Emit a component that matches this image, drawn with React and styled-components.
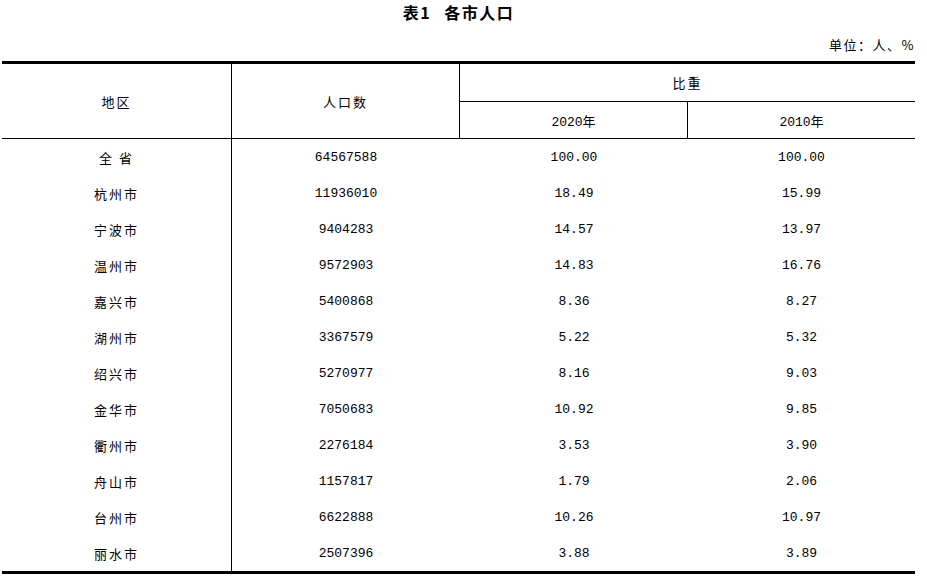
import React from "react";
import styled, { createGlobalStyle } from "styled-components";

const Global = createGlobalStyle`
  html, body { margin: 0; padding: 0; background: #fff; }
  body { font-family: "Noto Sans CJK SC", sans-serif; color: #000; }
`;

const Page = styled.div`
  width: 913px;
  margin-left: 2px;
`;

const Title = styled.h1`
  margin: 0;
  height: 25px;
  line-height: 25px;
  text-align: center;
  font-size: 16px;
  font-weight: 700;
  letter-spacing: 1.5px;
  font-family: "Noto Sans CJK SC", sans-serif;
`;

const TitleGap = styled.span`
  display: inline-block;
  width: 13px;
`;

const Unit = styled.div`
  height: 36px;
  line-height: 40px;
  text-align: right;
  font-size: 13px;
  letter-spacing: 1.5px;
  font-family: "Noto Sans CJK SC", sans-serif;
`;

const Table = styled.table`
  width: 913px;
  border-collapse: separate;
  border-spacing: 0;
  border-top: 3px solid #000;
  border-bottom: 3px solid #000;
  table-layout: fixed;
`;

const Head = styled.th`
  padding: 0;
  box-sizing: border-box;
  font-weight: 400;
  font-size: 13px;
  letter-spacing: ${(p) => (p.$num ? "0" : "2px")};
  text-align: center;
  vertical-align: middle;
  height: ${(p) => p.$h}px;
  border-right: ${(p) => (p.$right ? "1px solid #000" : "none")};
  border-bottom: 1px solid #000;
  font-family: "Liberation Mono", "Noto Sans CJK SC", monospace;
`;

const Cell = styled.td`
  padding: 0;
  height: 36px;
  box-sizing: border-box;
  text-align: center;
  vertical-align: middle;
  font-size: 13px;
  border-right: ${(p) => (p.$right ? "1px solid #000" : "none")};
  font-family: ${(p) =>
    p.$num
      ? `"Liberation Mono", monospace`
      : `"Noto Sans CJK SC", sans-serif`};
  letter-spacing: ${(p) => (p.$num ? "0" : "2px")};
`;

const rows = [
  ["全 省", "64567588", "100.00", "100.00"],
  ["杭州市", "11936010", "18.49", "15.99"],
  ["宁波市", "9404283", "14.57", "13.97"],
  ["温州市", "9572903", "14.83", "16.76"],
  ["嘉兴市", "5400868", "8.36", "8.27"],
  ["湖州市", "3367579", "5.22", "5.32"],
  ["绍兴市", "5270977", "8.16", "9.03"],
  ["金华市", "7050683", "10.92", "9.85"],
  ["衢州市", "2276184", "3.53", "3.90"],
  ["舟山市", "1157817", "1.79", "2.06"],
  ["台州市", "6622888", "10.26", "10.97"],
  ["丽水市", "2507396", "3.88", "3.89"],
];

export default function App() {
  return (
    <>
      <Global />
      <Page>
        <Title>
          表1<TitleGap />各市人口
        </Title>
        <Unit>单位：人、%</Unit>
        <Table>
          <colgroup>
            <col style={{ width: 230 }} />
            <col style={{ width: 228 }} />
            <col style={{ width: 228 }} />
            <col style={{ width: 227 }} />
          </colgroup>
          <thead>
            <tr>
              <Head rowSpan={2} $right $h={75}>地区</Head>
              <Head rowSpan={2} $right $h={75}>人口数</Head>
              <Head colSpan={2} $h={38}>比重</Head>
            </tr>
            <tr>
              <Head $right $num $h={37}>2020年</Head>
              <Head $num $h={37}>2010年</Head>
            </tr>
          </thead>
          <tbody>
            {rows.map((r) => (
              <tr key={r[0]}>
                <Cell $right>{r[0]}</Cell>
                <Cell $num>{r[1]}</Cell>
                <Cell $num>{r[2]}</Cell>
                <Cell $num>{r[3]}</Cell>
              </tr>
            ))}
          </tbody>
        </Table>
      </Page>
    </>
  );
}
